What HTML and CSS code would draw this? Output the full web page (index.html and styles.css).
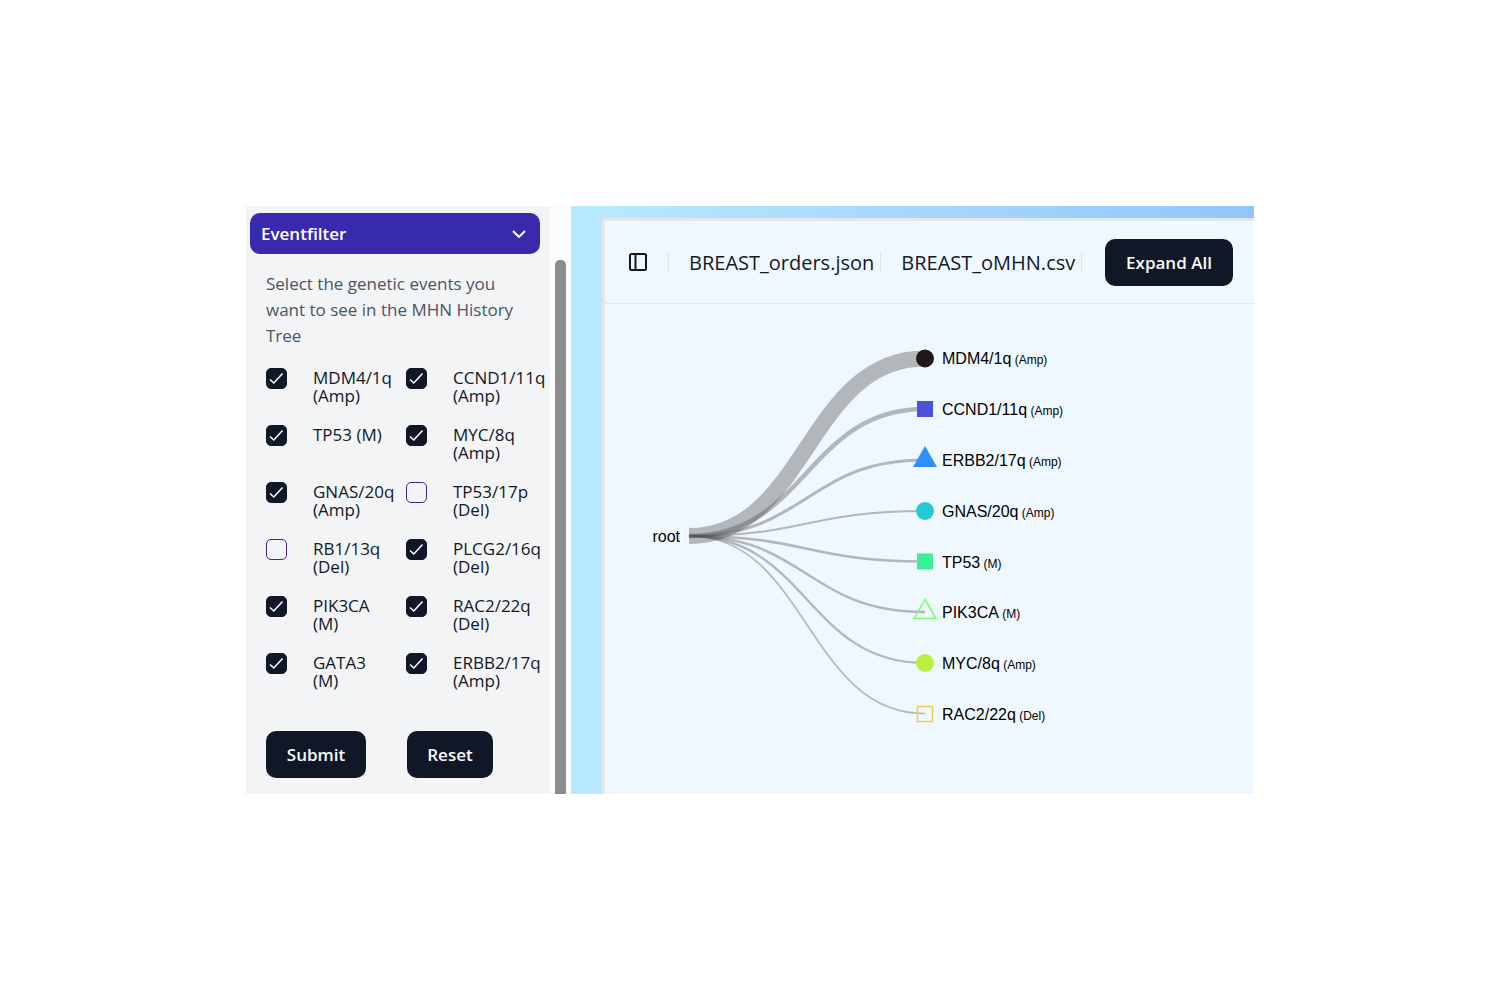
FILE: index.html
```html
<!DOCTYPE html>
<html lang="en">
<head>
<meta charset="utf-8">
<meta name="viewport" content="width=device-width, initial-scale=1">
<title>MHN History Tree</title>
<link rel="stylesheet" href="styles.css">
</head>
<body>
<svg width="0" height="0" class="sprite" aria-hidden="true">
  <symbol id="check" viewBox="0 0 15 15"><path d="M1 8.500L4.800 12L13.500 2.500" fill="none" stroke="currentColor" stroke-width="1.500"/></symbol>
</svg>
<div class="app">
  <aside class="sidebar">
    <form class="filter">
      <button type="button" class="filter-toggle">Eventfilter
        <svg class="chevron" viewBox="0 0 14 8" aria-hidden="true"><path d="M1 1l6 6 6-6" fill="none" stroke="currentColor" stroke-width="2"/></svg>
      </button>
      <div class="filter-body">
        <p class="hint">Select the genetic events you want to see in the MHN History Tree</p>
        <div class="events">
          <label class="event"><input type="checkbox" checked><svg class="tick"><use href="#check"/></svg><span>MDM4/1q (Amp)</span></label>
          <label class="event"><input type="checkbox" checked><svg class="tick"><use href="#check"/></svg><span>CCND1/11q (Amp)</span></label>
          <label class="event"><input type="checkbox" checked><svg class="tick"><use href="#check"/></svg><span>TP53 (M)</span></label>
          <label class="event"><input type="checkbox" checked><svg class="tick"><use href="#check"/></svg><span>MYC/8q (Amp)</span></label>
          <label class="event"><input type="checkbox" checked><svg class="tick"><use href="#check"/></svg><span>GNAS/20q (Amp)</span></label>
          <label class="event"><input type="checkbox"><svg class="tick"><use href="#check"/></svg><span>TP53/17p (Del)</span></label>
          <label class="event"><input type="checkbox"><svg class="tick"><use href="#check"/></svg><span>RB1/13q (Del)</span></label>
          <label class="event"><input type="checkbox" checked><svg class="tick"><use href="#check"/></svg><span>PLCG2/16q (Del)</span></label>
          <label class="event"><input type="checkbox" checked><svg class="tick"><use href="#check"/></svg><span>PIK3CA (M)</span></label>
          <label class="event"><input type="checkbox" checked><svg class="tick"><use href="#check"/></svg><span>RAC2/22q (Del)</span></label>
          <label class="event"><input type="checkbox" checked><svg class="tick"><use href="#check"/></svg><span>GATA3 (M)</span></label>
          <label class="event"><input type="checkbox" checked><svg class="tick"><use href="#check"/></svg><span>ERBB2/17q (Amp)</span></label>
        </div>
        <div class="actions">
          <button type="submit" class="button">Submit</button>
          <button type="reset" class="button">Reset</button>
        </div>
      </div>
    </form>
    <div class="track"><div class="thumb"></div></div>
  </aside>
  <main class="stage">
    <section class="panel">
      <header class="toolbar">
        <button type="button" class="icon-button" aria-label="Toggle sidebar">
          <svg viewBox="0 0 20 20" aria-hidden="true"><g fill="none" stroke="currentColor" stroke-width="2"><rect x="2" y="2" width="16" height="16" rx="1.500"/><path d="M7.500 2v16"/></g></svg>
        </button>
        <span class="divider"></span>
        <span class="file">BREAST_orders.json</span>
        <span class="divider"></span>
        <span class="file">BREAST_oMHN.csv</span>
        <span class="divider"></span>
        <button type="button" class="button">Expand All</button>
      </header>
      <svg class="tree" viewBox="0 0 649 489" preserveAspectRatio="xMinYMin meet" role="img" aria-label="MHN history tree">
        <g class="links">
          <path stroke-width="16" d="M84 232C202 232 202 54.500 320 54.500"/>
          <path stroke-width="4.500" d="M84 232C202 232 202 105 320 105"/>
          <path stroke-width="3" d="M84 232C202 232 202 156 320 156"/>
          <path stroke-width="2" d="M84 232C202 232 202 207 320 207"/>
          <path stroke-width="2.500" d="M84 232C202 232 202 257.500 320 257.500"/>
          <path stroke-width="2.500" d="M84 232C202 232 202 308 320 308"/>
          <path stroke-width="2.300" d="M84 232C202 232 202 359 320 359"/>
          <path stroke-width="1.700" d="M84 232C202 232 202 409.500 320 409.500"/>
        </g>
        <circle cx="320" cy="54.500" r="9" fill="#23171b"/>
        <rect x="312" y="97" width="16" height="16" fill="#4a50d8"/>
        <path d="M320 142L332 163H308z" fill="#2f8ffb"/>
        <circle cx="320" cy="207" r="9" fill="#26c8d6"/>
        <rect x="312" y="249.500" width="16" height="16" fill="#3aef9a"/>
        <path d="M320 295.500L331 314.500H309z" fill="none" stroke="#7cfa70" stroke-width="1.500"/>
        <circle cx="320" cy="359" r="9" fill="#b9f040"/>
        <rect x="312.500" y="402.500" width="15" height="15" fill="none" stroke="#f2cd48" stroke-width="1.500"/>
        <g class="names">
          <text x="75" y="238" text-anchor="end">root</text>
          <text x="337" y="60">MDM4/1q<tspan class="kind"> (Amp)</tspan></text>
          <text x="337" y="111">CCND1/11q<tspan class="kind"> (Amp)</tspan></text>
          <text x="337" y="162">ERBB2/17q<tspan class="kind"> (Amp)</tspan></text>
          <text x="337" y="213">GNAS/20q<tspan class="kind"> (Amp)</tspan></text>
          <text x="337" y="264">TP53<tspan class="kind"> (M)</tspan></text>
          <text x="337" y="314">PIK3CA<tspan class="kind"> (M)</tspan></text>
          <text x="337" y="365">MYC/8q<tspan class="kind"> (Amp)</tspan></text>
          <text x="337" y="416">RAC2/22q<tspan class="kind"> (Del)</tspan></text>
        </g>
      </svg>
    </section>
  </main>
</div>
</body>
</html>
```
FILE: styles.css
```css
* { box-sizing: border-box; }

body {
  margin: 0;
  min-height: 100vh;
  display: flex;
  align-items: center;
  justify-content: center;
  background: #fff;
  color: #111827;
  font-family: "Open Sans", "Noto Sans", sans-serif;
}

button {
  border: 0;
  font: inherit;
  cursor: pointer;
}

.sprite { display: none; }

.app {
  display: flex;
  width: 100%;
  max-width: 1008px;
}

/* Sidebar */
.sidebar {
  display: flex;
  flex: none;
  background: #f3f4f6;
}

.filter {
  width: 304px;
  padding: 7px 4px 16px;
}

.filter-toggle {
  display: flex;
  align-items: center;
  justify-content: space-between;
  width: 290px;
  height: 41px;
  padding: 1px 14px 0 11px;
  border-radius: 10px;
  background: #372aac;
  color: #fff;
  font-size: 17px;
  font-weight: 600;
  line-height: 26px;
}

.chevron { width: 14px; height: 8px; }

.filter-body { padding: 17px 0 0 16px; }

.hint {
  width: 260px;
  margin: 0;
  color: #4a5565;
  font-size: 17px;
  line-height: 26px;
}

.events {
  display: grid;
  grid-template-columns: repeat(2, 140px);
  row-gap: 20px;
  margin-top: 19px;
}

/* Long gene names may run past the narrow text column */
.event {
  display: grid;
  grid-template-columns: 21px 75px;
  column-gap: 26px;
  align-items: start;
  height: 37px;
  font-size: 17px;
  line-height: 18px;
}

.event input,
.event .tick { grid-area: 1 / 1; }

.event input {
  appearance: none;
  width: 21px;
  height: 21px;
  margin: 0;
  border: 1px solid #4b2191;
  border-radius: 5px;
}

.event input:checked {
  border-color: #101828;
  background: #101828;
}

.event .tick {
  display: none;
  width: 15px;
  height: 15px;
  margin: 3px;
  color: #fff;
  pointer-events: none;
}

.event input:checked + .tick { display: block; }

.event span { padding-top: 1px; }

.actions {
  display: grid;
  grid-template-columns: 100px 86px;
  column-gap: 41px;
  margin-top: 41px;
}

.button {
  height: 47px;
  border-radius: 10px;
  background: #101828;
  color: #f9fafb;
  font-size: 17px;
  font-weight: 600;
  text-align: center;
}

.track {
  display: flex;
  width: 21px;
  padding: 54px 5px 0;
  background: #fcfcfc;
}

.thumb {
  flex: 1;
  border-radius: 5px 5px 0 0;
  background: #8b8b8b;
}

/* Tree panel */
.stage {
  display: flex;
  flex: 1;
  min-width: 0;
  padding: 12px 0 0 31px;
  background: linear-gradient(to right, #b8eaff, #93c5fd);
}

.panel {
  flex: 1;
  min-width: 0;
  border: solid #e5e7eb;
  border-width: 3px 0 0 3px;
  background: #f0f8ff;
}

.toolbar {
  display: flex;
  align-items: center;
  height: 83px;
  padding: 0 21px 0 23px;
  border-bottom: 1px solid #e5e7eb;
}

.icon-button {
  display: flex;
  flex: none;
  padding: 0;
  background: none;
  color: #101828;
}

.icon-button svg { width: 20px; height: 20px; }

.divider {
  flex: none;
  width: 1px;
  height: 21px;
  margin-right: 20px;
  background: #dfe5ec;
}

.icon-button + .divider { margin-left: 20px; }

.file {
  margin-right: 6px;
  padding-top: 2px;
  font-size: 20px;
  line-height: 28px;
}

.toolbar .button {
  flex: none;
  width: 128px;
  margin-left: auto;
}

.tree {
  display: block;
  width: 100%;
}

.links {
  fill: none;
  stroke: #555;
  stroke-opacity: 0.4;
}

.names {
  fill: #000;
  font: 16px "Liberation Sans", Arial, sans-serif;
}

.kind { font-size: 12px; }
```
